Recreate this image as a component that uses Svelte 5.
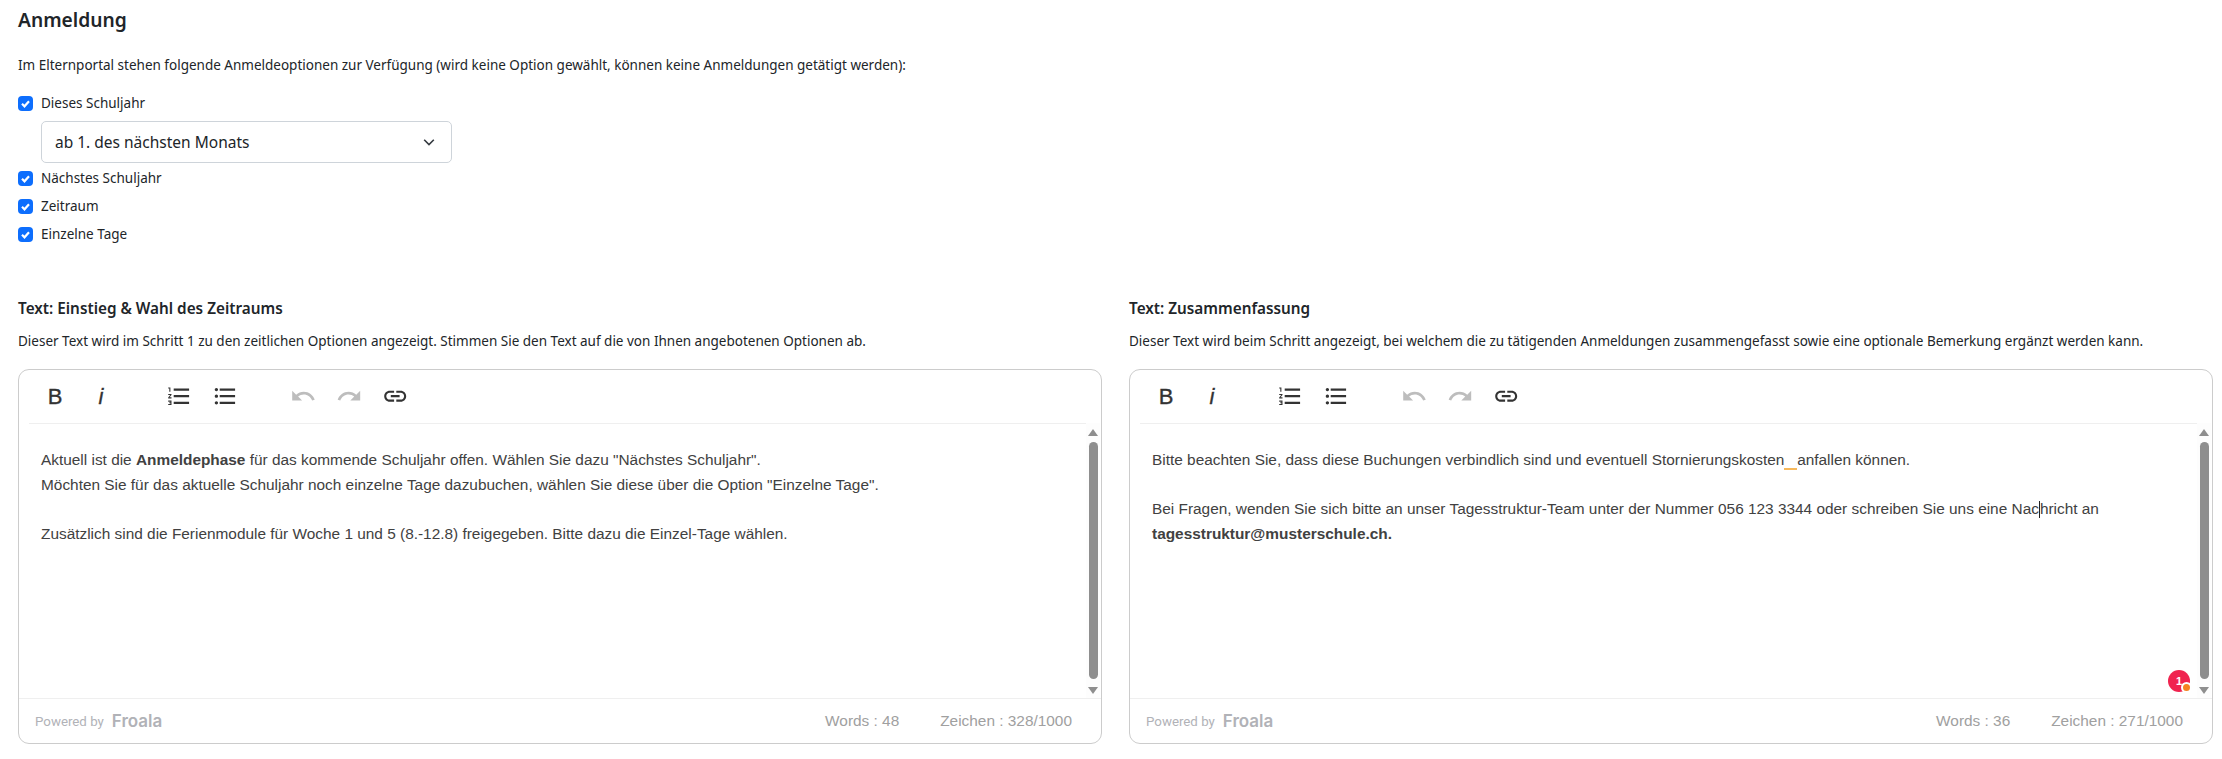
<script>
    const options = ["Dieses Schuljahr", "Nächstes Schuljahr", "Zeitraum", "Einzelne Tage"];
</script>

{#snippet icon(d, muted = false)}
    <svg class="icon" class:muted viewBox="0 0 24 24" width="26.4" height="26.4"><path {d} /></svg>
{/snippet}

{#snippet toolbar()}
    <div class="toolbar">
        <div class="group">
            <span class="btn"><span class="bold">B</span></span>
            <span class="btn"><span class="italic">i</span></span>
        </div>
        <div class="group">
            <span class="btn">{@render icon("M2 17h2v.5H3v1h1v.5H2v1h3v-4H2v1zm1-9h1V4H2v1h1v3zm-1 3h1.8L2 13.1v.9h3v-1H3.2L5 10.9V10H2v1zm5-6v2h14V5H7zm0 14h14v-2H7v2zm0-6h14v-2H7v2z")}</span>
            <span class="btn">{@render icon("M4 10.5c-.83 0-1.5.67-1.5 1.5s.67 1.5 1.5 1.5 1.5-.67 1.5-1.5-.67-1.5-1.5-1.5zm0-6c-.83 0-1.5.67-1.5 1.5S3.17 7.5 4 7.5 5.5 6.83 5.5 6 4.83 4.5 4 4.5zm0 12c-.83 0-1.5.68-1.5 1.5s.68 1.5 1.5 1.5 1.5-.68 1.5-1.5-.67-1.5-1.5-1.5zM7 19h14v-2H7v2zm0-6h14v-2H7v2zm0-8v2h14V5H7z")}</span>
        </div>
        <div class="group">
            <span class="btn">{@render icon("M12.5 8c-2.65 0-5.05.99-6.9 2.6L2 7v9h9l-3.62-3.62c1.39-1.16 3.16-1.88 5.12-1.88 3.54 0 6.55 2.31 7.6 5.5l2.37-.78C21.08 11.03 17.15 8 12.5 8z", true)}</span>
            <span class="btn">{@render icon("M18.4 10.6C16.55 8.99 14.15 8 11.5 8c-4.65 0-8.58 3.03-9.96 7.22L3.9 16c1.05-3.19 4.05-5.5 7.6-5.5 1.95 0 3.73.72 5.12 1.88L13 16h9V7l-3.6 3.6z", true)}</span>
            <span class="btn">{@render icon("M3.9 12c0-1.71 1.39-3.1 3.1-3.1h4V7H7c-2.76 0-5 2.24-5 5s2.24 5 5 5h4v-1.9H7c-1.71 0-3.1-1.39-3.1-3.1zM8 13h8v-2H8v2zm9-6h-4v1.9h4c1.71 0 3.1 1.39 3.1 3.1s-1.39 3.1-3.1 3.1h-4V17h4c2.76 0 5-2.24 5-5s-2.24-5-5-5z")}</span>
        </div>
    </div>
{/snippet}

{#snippet scrollbar()}
    <div class="scrollbar">
        <span class="arrow up"></span>
        <span class="thumb"></span>
        <span class="arrow down"></span>
    </div>
{/snippet}

{#snippet footer(words, chars)}
    <div class="footer">
        <span class="powered">Powered by <span class="froala">Froala</span></span>
        <span class="counts">
            <span>Words : {words}</span>
            <span>Zeichen : {chars}/1000</span>
        </span>
    </div>
{/snippet}

<main>
    <h2>Anmeldung</h2>
    <p class="intro">Im Elternportal stehen folgende Anmeldeoptionen zur Verfügung (wird keine Option gewählt, können keine Anmeldungen getätigt werden):</p>

    <div class="options">
        {#each options as opt, i}
            <label class="option">
                <span class="check">
                    <svg viewBox="0 0 15 15" width="15" height="15"><path d="M4 7.8l2.5 2.5L11 5.3" fill="none" stroke="#fff" stroke-width="2.2" /></svg>
                </span>
                {opt}
            </label>
            {#if i === 0}
                <div class="select">
                    <span>ab 1. des nächsten Monats</span>
                    <svg viewBox="0 0 16 16" width="14" height="14"><path d="M2.5 5.5L8 11l5.5-5.5" fill="none" stroke="#343a40" stroke-width="1.8" /></svg>
                </div>
            {/if}
        {/each}
    </div>

    <div class="editors">
        <section>
            <h3>Text: Einstieg &amp; Wahl des Zeitraums</h3>
            <p class="hint">Dieser Text wird im Schritt 1 zu den zeitlichen Optionen angezeigt. Stimmen Sie den Text auf die von Ihnen angebotenen Optionen ab.</p>
            <div class="editor">
                {@render toolbar()}
                <div class="body">
                    <div class="content">
                        <p>Aktuell ist die <strong>Anmeldephase</strong> für das kommende Schuljahr offen. Wählen Sie dazu "Nächstes Schuljahr".<br />Möchten Sie für das aktuelle Schuljahr noch einzelne Tage dazubuchen, wählen Sie diese über die Option "Einzelne Tage".</p>
                        <p>Zusätzlich sind die Ferienmodule für Woche 1 und 5 (8.-12.8) freigegeben. Bitte dazu die Einzel-Tage wählen.</p>
                    </div>
                    {@render scrollbar()}
                </div>
                {@render footer(48, 328)}
            </div>
        </section>
        <section>
            <h3>Text: Zusammenfassung</h3>
            <p class="hint">Dieser Text wird beim Schritt angezeigt, bei welchem die zu tätigenden Anmeldungen zusammengefasst sowie eine optionale Bemerkung ergänzt werden kann.</p>
            <div class="editor">
                {@render toolbar()}
                <div class="body">
                    <div class="content">
                        <p>Bitte beachten Sie, dass diese Buchungen verbindlich sind und eventuell Stornierungskosten<span class="spell">&nbsp;&nbsp;&nbsp;</span>anfallen können.</p>
                        <p>Bei Fragen, wenden Sie sich bitte an unser Tagesstruktur-Team unter der Nummer 056 123 3344 oder schreiben Sie uns eine Nac<span class="caret"></span>hricht an <strong>tagesstruktur@musterschule.ch.</strong></p>
                    </div>
                    {@render scrollbar()}
                    <span class="badge">1<span class="dot"></span></span>
                </div>
                {@render footer(36, 271)}
            </div>
        </section>
    </div>
</main>

<style>
    :global(body) {
        margin: 0;
        background: #fff;
    }
    main {
        padding: 8px 9px 0 18px;
        font-family: "Noto Sans", sans-serif;
        color: #212529;
    }
    h2 {
        margin: 0;
        font-size: 19.2px;
        line-height: 24px;
        font-weight: 600;
    }
    .intro {
        margin: 21px 0 0;
        font-size: 13.5px;
        line-height: 24px;
    }
    .options {
        margin-top: 12px;
    }
    .option {
        display: flex;
        align-items: center;
        gap: 8px;
        height: 28px;
        font-size: 13.5px;
    }
    .check {
        width: 15px;
        height: 15px;
        border-radius: 4px;
        background: #0d6efd;
        display: flex;
    }
    .select {
        margin: 4px 0 1px 23px;
        width: 411px;
        height: 42px;
        box-sizing: border-box;
        border: 1px solid #ced4da;
        border-radius: 5px;
        padding: 0 15px 0 13px;
        display: flex;
        align-items: center;
        justify-content: space-between;
        font-size: 15.5px;
    }
    .editors {
        display: grid;
        grid-template-columns: 1fr 1fr;
        gap: 27px;
        margin-top: 48px;
    }
    h3 {
        margin: 0;
        font-size: 15.3px;
        line-height: 24px;
        font-weight: 600;
    }
    .hint {
        margin: 9px 0 0;
        font-size: 13.5px;
        line-height: 24px;
    }
    .editor {
        margin-top: 16px;
        height: 375px;
        box-sizing: border-box;
        border: 1px solid #ccc;
        border-radius: 11px;
        display: flex;
        flex-direction: column;
        font-family: "Liberation Sans", Arial, sans-serif;
    }
    .toolbar {
        height: 53px;
        flex: none;
        margin: 0 10px;
        padding-left: 3px;
        border-bottom: 1px solid #efefef;
        display: flex;
        gap: 32px;
    }
    .group {
        display: flex;
        align-items: center;
    }
    .btn {
        width: 46px;
        height: 27px;
        display: flex;
        align-items: center;
        justify-content: center;
        color: #333;
    }
    .bold {
        font-size: 22px;
        -webkit-text-stroke: 0.35px #333;
    }
    .italic {
        font-size: 22px;
        font-style: italic;
        -webkit-text-stroke: 0.3px #333;
    }
    .icon {
        fill: #333;
    }
    .icon.muted {
        fill: #bdbdbd;
    }
    .body {
        flex: 1;
        min-height: 0;
        display: flex;
        position: relative;
    }
    .content {
        flex: 1;
        padding: 24px 22px;
        font-size: 15.4px;
        line-height: 24.5px;
        color: #414141;
    }
    .content p {
        margin: 0 0 24.5px;
    }
    .content strong {
        font-weight: 700;
    }
    .spell {
        border-bottom: 2px solid #f7b95c;
    }
    .caret {
        display: inline-block;
        width: 1px;
        height: 17px;
        background: #222;
        vertical-align: -4px;
    }
    .scrollbar {
        width: 14px;
        flex: none;
        background: #fdfdfd;
        margin-right: 1px;
        margin-top: -1px;
        display: flex;
        flex-direction: column;
        align-items: center;
        padding: 6px 0 4px;
        box-sizing: border-box;
    }
    .thumb {
        flex: 1;
        width: 9px;
        border-radius: 5px;
        background: #8e8e8e;
        margin: 6px 0 8px;
    }
    .arrow {
        width: 0;
        height: 0;
        border-left: 5px solid transparent;
        border-right: 5px solid transparent;
    }
    .arrow.up {
        border-bottom: 7px solid #8e8e8e;
    }
    .arrow.down {
        border-top: 7px solid #8e8e8e;
    }
    .badge {
        position: absolute;
        right: 22px;
        bottom: 6px;
        width: 22px;
        height: 22px;
        border-radius: 50%;
        background: #f0234f;
        color: #fff;
        font: 700 11px/22px "Liberation Sans", sans-serif;
        text-align: center;
    }
    .dot {
        position: absolute;
        right: -2px;
        bottom: -1px;
        width: 7px;
        height: 7px;
        border-radius: 50%;
        background: #f58220;
        border: 2px solid #fff;
    }
    .footer {
        height: 44px;
        flex: none;
        border-top: 1px solid #efefef;
        display: flex;
        align-items: center;
        justify-content: space-between;
        padding: 0 29px 0 16px;
        color: #a0a0a0;
        font-size: 15.4px;
    }
    .powered {
        font-family: "Roboto", sans-serif;
        font-size: 13.3px;
        color: #b1b2b7;
        display: flex;
        align-items: center;
        gap: 8px;
    }
    .froala {
        font-family: "Inter", sans-serif;
        font-size: 17px;
        font-weight: 600;
    }
    .counts {
        display: flex;
        gap: 41px;
    }
</style>
